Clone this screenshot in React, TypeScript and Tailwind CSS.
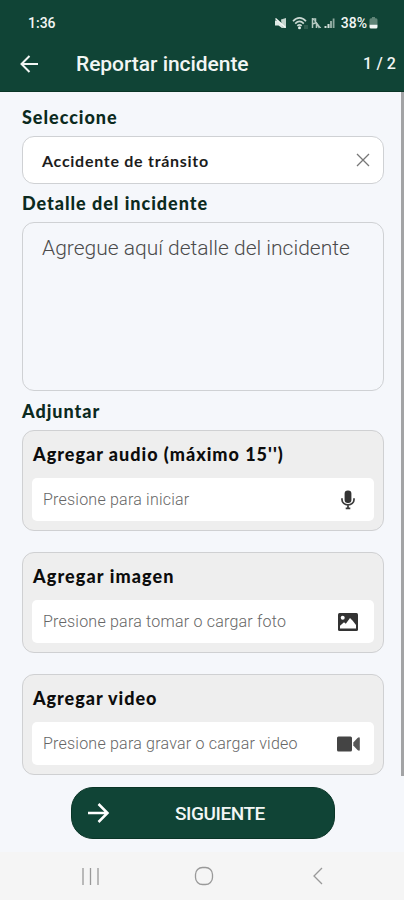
import type { ReactNode } from "react";

function MuteIcon() {
  return (
    <svg viewBox="0 0 12 12" className="h-3 w-3" fill="none">
      <path d="M0 3.500h3L7 7v4L3.500 8.500H0z" fill="#dfe9e5" />
      <path d="M6 2.500L11 1v10H7z" fill="#c3d3cc" />
      <path d="M.5 1.500l10 9" stroke="#f2f6f4" strokeWidth="1.500" />
    </svg>
  );
}

function WifiIcon() {
  return (
    <svg viewBox="0 0 16 13" className="h-[13px] w-4" fill="none">
      <path d="M1 4.200C5-.2 10-.2 14 4.200M3.200 6.600c2.800-2.800 5.800-2.800 8.600 0M5.300 8.900c1.400-1.300 3-1.300 4.400 0" stroke="#c9d8d2" strokeWidth="1.700" />
      <circle cx="7.500" cy="10.800" r="1.500" fill="#e4edea" />
      <path d="M13 8v4M15 8v4" stroke="#4d7567" strokeWidth="1" />
    </svg>
  );
}

function NoSimIcon() {
  return (
    <svg viewBox="0 0 11 12" className="h-3 w-[11px]" fill="none">
      <path d="M1.500 11V2h3v4l-3 1M5.500 11V6l3 5" stroke="#b5c9c1" strokeWidth="1.500" />
      <path d="M1 1l9 10" stroke="#b5c9c1" strokeWidth="1" />
    </svg>
  );
}

function SignalIcon() {
  return (
    <svg viewBox="0 0 11 12" className="h-3 w-[11px]">
      <path d="M.5 9h2v2h-2zM3.500 7h2v4h-2z" fill="#d3dfdb" />
      <path d="M6 4h2v7H6zM8.700 1.500h1.800V11H8.700z" fill="#8eaaa0" />
    </svg>
  );
}

function BatteryIcon() {
  return (
    <svg viewBox="0 0 9 12" className="h-3 w-[9px]">
      <path d="M3 0h3v1.200h1q1.500 0 1.500 1.500V7h-8V2.700Q.5 1.200 2 1.200h1z" fill="#5f8477" />
      <path d="M.5 7.500h8v2.600q0 1.500-1.500 1.500H2q-1.500 0-1.500-1.500z" fill="#f2f7f5" />
    </svg>
  );
}

function MicIcon() {
  return (
    <svg viewBox="0 0 14 20" className="h-5 w-[14px]" fill="none">
      <rect x="3.600" y="0.500" width="6.800" height="12.500" rx="3.200" fill="#333" />
      <path d="M1 8.300v1.400a6 5.200 0 0012 0V8.300M7 15v3.500M4.700 18.300h4.600" stroke="#3a3a3a" strokeWidth="1.700" />
    </svg>
  );
}

function ImageIcon() {
  return (
    <svg viewBox="0 0 20 18" className="h-[18px] w-5">
      <rect width="20" height="18" rx="1.500" fill="#333" />
      <circle cx="4.700" cy="4.700" r="2" fill="#fff" />
      <path d="M2 15.500v-2.700l4-3.500 1.800 1.500L12 5l2.500 2.500L18 12v3.500z" fill="#fff" />
    </svg>
  );
}

function VideoIcon() {
  return (
    <svg viewBox="0 0 23 16" className="h-4 w-[23px]">
      <rect y="0.500" width="15" height="15" rx="1.500" fill="#444" />
      <path d="M16.300 6.500L20.500 2q2.300-1.600 2.300.6v10.800q0 2.200-2.300.6L16.300 9.500z" fill="#585858" />
    </svg>
  );
}

type AttachmentProps = {
  title: string;
  titleClass: string;
  hint: string;
  icon: ReactNode;
};

const ATTACHMENTS: AttachmentProps[] = [
  {
    title: "Agregar audio (máximo 15'')",
    titleClass: "tracking-[0.99px]",
    hint: "Presione para iniciar",
    icon: <MicIcon />,
  },
  {
    title: "Agregar imagen",
    titleClass: "tracking-[1.100px]",
    hint: "Presione para tomar o cargar foto",
    icon: <ImageIcon />,
  },
  {
    title: "Agregar video",
    titleClass: "tracking-[0.950px]",
    hint: "Presione para gravar o cargar video",
    icon: <VideoIcon />,
  },
];

function Attachment({ title, titleClass, hint, icon }: AttachmentProps) {
  return (
    <section className="h-[101px] rounded-xl border border-[#cfd0d2] bg-[#eeeeee] px-[9px] pt-[11px]">
      <h3 className={`h-9 pl-px font-[Lato] text-[18px] leading-6 font-black whitespace-nowrap text-[#0c0c0c] ${titleClass}`}>
        {title}
      </h3>
      <button className="flex h-[43px] w-full items-center rounded-[5px] bg-white pl-[11px]">
        <span className="pt-px text-[16px] font-light tracking-[0.220px] whitespace-nowrap text-[#666]">
          {hint}
        </span>
        <span className="mr-[14px] ml-auto flex w-6 justify-center">{icon}</span>
      </button>
    </section>
  );
}

function Label({ children }: { children: ReactNode }) {
  return (
    <h2 className="font-[Lato] text-[18px] leading-6 font-black tracking-[0.970px] text-[#0b2a20]">
      {children}
    </h2>
  );
}

export default function App() {
  return (
    <div className="flex h-[900px] w-[404px] flex-col overflow-hidden bg-[#f5f7fb] font-[Roboto,sans-serif]">
      <header className="h-[92px] border-b border-[#0a3527] bg-[#104436] text-[#f2f6f4]">
        <div className="flex h-[46px] items-center pr-[26px] pl-7">
          <span className="text-[14px] font-medium">1:36</span>
          <div className="ml-auto flex items-center">
            <MuteIcon />
            <span className="ml-[5px]"><WifiIcon /></span>
            <span className="ml-[3px]"><NoSimIcon /></span>
            <span className="ml-[2px]"><SignalIcon /></span>
            <span className="ml-[6px] text-[14px] font-medium">38%</span>
            <span className="ml-[2px]"><BatteryIcon /></span>
          </div>
        </div>
        <div className="flex h-9 items-center pr-2 pl-[20px]">
          <svg viewBox="0 0 18 18" className="h-[18px] w-[18px]" fill="none" stroke="#f2f6f4" strokeWidth="2">
            <path d="M18 9H2M9.500 1L1.500 9l8 8" />
          </svg>
          <h1 className="ml-[38px] pt-[2px] text-[21px] font-medium tracking-[-0.050px]">Reportar incidente</h1>
          <span className="ml-auto text-[16px] font-medium tracking-[0.1px]">1 / 2</span>
        </div>
      </header>

      <div className="flex h-[760px]">
        <main className="w-[401px] pt-[13px] pr-[17px] pl-[22px]">
          <Label>Seleccione</Label>
          <div className="mt-[7px] flex h-12 items-center rounded-xl border border-[#cfd1d4] bg-white pr-[13px] pl-[19px]">
            <span className="pt-px font-[Lato] text-[16px] font-bold tracking-[0.720px] text-[#1c1c1c]">
              Accidente de tránsito
            </span>
            <svg viewBox="0 0 14 14" className="ml-auto h-[14px] w-[14px]" fill="none" stroke="#777" strokeWidth="1.300">
              <path d="M1 1l12 12M13 1L1 13" />
            </svg>
          </div>
          <div className="mt-[7px]">
            <Label>Detalle del incidente</Label>
          </div>
          <div className="mt-[7px] h-[169px] rounded-xl border border-[#cfd1d4] pt-[10px] pl-[19px] text-[21px] leading-[30px] font-light whitespace-nowrap text-[#4b4b4b]">
            Agregue aquí detalle del incidente
          </div>
          <div className="mt-[8px] mb-[7px]">
            <Label>Adjuntar</Label>
          </div>
          <div className="flex flex-col gap-[21px]">
            {ATTACHMENTS.map((item) => (
              <Attachment key={item.title} {...item} />
            ))}
          </div>
          <button className="mt-3 ml-[49px] flex h-[52px] w-[264px] items-center rounded-[22px] border border-[#0a3527] bg-[#104436] pl-4 text-[#f2f6f4]">
            <svg viewBox="0 0 22 20" className="h-5 w-[22px]" fill="none" stroke="#fff" strokeWidth="2.500">
              <path d="M0 10h20M10.500 1l9 9-9 9" />
            </svg>
            <span className="ml-[65px] pt-[2px] text-[19px] font-medium tracking-[-0.450px]">SIGUIENTE</span>
          </button>
        </main>
        <div className="h-[684px] w-[3px] bg-[#a2a3a5]" />
      </div>

      <nav className="flex h-12 items-center bg-[#f5f5f5] pl-[82px]">
        <svg viewBox="0 0 17 17" className="h-[17px] w-[17px]" stroke="#999" strokeWidth="1.300">
          <path d="M1 0v17M8.500 0v17M16 0v17" />
        </svg>
        <svg viewBox="0 0 20 20" className="ml-[95px] h-5 w-5" fill="none" stroke="#999" strokeWidth="1.300">
          <rect x="1.500" y="1.500" width="17" height="17" rx="7" />
        </svg>
        <svg viewBox="0 0 12 18" className="ml-[98px] h-[18px] w-3" fill="none" stroke="#999" strokeWidth="1.300">
          <path d="M10 1L2 9l8 8" />
        </svg>
      </nav>
    </div>
  );
}
